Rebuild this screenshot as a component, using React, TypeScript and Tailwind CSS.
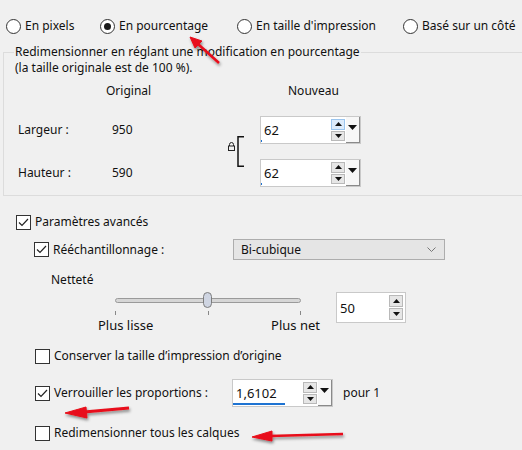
import React from 'react';

function Radio({ label, checked = false }: { label: string; checked?: boolean }) {
  return (
    <div className="flex items-center gap-[4px]">
      <span className="w-[15px] h-[15px] rounded-full border border-[#333] bg-white flex items-center justify-center">
        {checked && <span className="w-[7px] h-[7px] rounded-full bg-[#1a1a1a]" />}
      </span>
      <span>{label}</span>
    </div>
  );
}

function Checkbox({ label, checked = false }: { label: string; checked?: boolean }) {
  return (
    <div className="flex items-center gap-[4px]">
      <span className="w-[15px] h-[15px] border border-[#333] bg-white flex items-center justify-center">
        {checked && (
          <svg width="11" height="9" viewBox="0 0 11 9">
            <path d="M1 4.5 L4 7.5 L10 1" fill="none" stroke="#222" strokeWidth="1.2" />
          </svg>
        )}
      </span>
      <span>{label}</span>
    </div>
  );
}

function Tri({ down = false }: { down?: boolean }) {
  return (
    <svg width="7" height="4" viewBox="0 0 7 4">
      <path d={down ? 'M0 0 H7 L3.5 4 Z' : 'M0 4 H7 L3.5 0 Z'} fill="#111" />
    </svg>
  );
}

function SpinInput({
  value,
  w,
  h,
  dropdown = true,
  bar = 1,
  hover = false,
}: {
  value: string;
  w: string;
  h: string;
  dropdown?: boolean;
  bar?: number;
  hover?: boolean;
}) {
  return (
    <div className={`${w} ${h} flex border border-[#c9c9c9] bg-white`}>
      <div className="relative flex-1 flex items-center pl-[3px] text-[13px]">
        {value}
        <span className="absolute left-0 bottom-[1px] h-[2px] bg-[#1e73d2]" style={{ width: bar }} />
      </div>
      <div className="w-[14px] flex flex-col justify-center gap-[1px] py-[2px]">
        <span className={`flex-1 flex items-center justify-center border ${hover ? 'border-[#9bc5ee] bg-[#dcebfb]' : 'border-[#b9b9b9] bg-[#e6e6e6]'}`}>
          <Tri />
        </span>
        <span className="flex-1 flex items-center justify-center border border-[#b9b9b9] bg-[#e6e6e6]">
          <Tri down />
        </span>
      </div>
      {dropdown ? (
        <div className="w-[14px] ml-[1px] flex items-start justify-center pt-[8px] bg-[#f7f7f7] border-r border-b border-[#8a8a8a]">
          <svg width="9" height="5" viewBox="0 0 9 5">
            <path d="M0 0 H9 L4.5 5 Z" fill="#111" />
          </svg>
        </div>
      ) : (
        <div className="w-[2px]" />
      )}
    </div>
  );
}

export default function App() {
  return (
    <div
      className="relative w-[522px] h-[450px] overflow-hidden bg-[#f0f0f0] text-[12px] leading-[16px] text-[#111]"
      style={{ fontFamily: '"Noto Sans", "Open Sans", sans-serif' }}
    >
      {/* unit choice */}
      <div className="flex items-center h-[16px] mt-[18px] pl-[6px]">
        <div className="w-[94px]"><Radio label="En pixels" /></div>
        <div className="w-[137px]"><Radio label="En pourcentage" checked /></div>
        <div className="w-[166px]"><Radio label="En taille d'impression" /></div>
        <Radio label="Basé sur un côté" />
      </div>

      <fieldset className="mt-[10px] ml-[3px] w-[540px] border-t border-l border-b border-[#dcdcdc] px-0 pb-[8px]">
        <legend className="ml-[10px] px-[1px]">Redimensionner en réglant une modification en pourcentage</legend>
        <div className="pl-[14px]">
          <div className="-ml-[3px]">(la taille originale est de 100 %).</div>

          <div className="flex mt-[7px]">
            <div className="ml-[88px] w-[182px]">Original</div>
            <div>Nouveau</div>
          </div>

          <div className="flex items-center mt-[17px]">
            <div className="flex flex-col gap-[15px] w-[210px]">
              <div className="h-[28px] flex items-center">
                <span className="w-[94px]">Largeur :</span>
                <span>950</span>
              </div>
              <div className="h-[28px] flex items-center">
                <span className="w-[94px]">Hauteur :</span>
                <span>590</span>
              </div>
            </div>
            <div className="flex items-center gap-[2px]">
              <svg className="-mt-[10px]" width="7" height="9" viewBox="0 0 7 9">
                <path d="M1.5 4 V2.5 A2 2 0 0 1 5.5 2.5 V4" fill="none" stroke="#222" strokeWidth="1" />
                <rect x="0.5" y="4" width="6" height="4.5" fill="none" stroke="#222" strokeWidth="1" />
              </svg>
              <svg width="8" height="31" viewBox="0 0 8 31">
                <path d="M7 0.75 H1 V30.25 H7" fill="none" stroke="#111" strokeWidth="1.5" />
              </svg>
            </div>
            <div className="flex flex-col gap-[15px] ml-[15px]">
              <SpinInput value="62" w="w-[101px]" h="h-[28px]" hover />
              <SpinInput value="62" w="w-[101px]" h="h-[28px]" />
            </div>
          </div>
        </div>
      </fieldset>

      {/* advanced */}
      <div className="mt-[18px] pl-[16px]">
        <Checkbox label="Paramètres avancés" checked />
      </div>

      <div className="flex items-center mt-[9px] pl-[34px]">
        <div className="w-[199px]"><Checkbox label="Rééchantillonnage :" checked /></div>
        <div className="w-[212px] h-[21px] flex items-center justify-between pl-[7px] pr-[8px] bg-[#e5e5e5] border border-[#adadad]">
          <span>Bi-cubique</span>
          <svg width="9" height="5" viewBox="0 0 9 5">
            <path d="M0.5 0.5 L4.5 4.5 L8.5 0.5" fill="none" stroke="#777" strokeWidth="1" />
          </svg>
        </div>
      </div>

      <div className="mt-[12px] pl-[51px]">Netteté</div>

      <div className="flex items-start mt-[3px] pl-[98px]">
        <div className="w-[226px] flex flex-col">
          <div className="relative h-[18px] ml-[17px] mr-[23px] flex items-center">
            <div className="w-full h-[5px] rounded-full bg-[#d6d6d6] border border-[#9a9a9a]" />
            <div className="absolute left-[88px] top-[1px] w-[9px] h-[16px] rounded-full bg-[#cfd5e2] border border-[#7d7d7d]" />
          </div>
          <div className="flex justify-between ml-[17px] mr-[23px] h-[8px] items-center">
            <span className="w-px h-[4px] bg-[#888]" />
            <span className="w-px h-[4px] bg-[#888]" />
            <span className="w-px h-[4px] bg-[#888]" />
          </div>
          <div className="flex justify-between text-[13px] leading-[16px]">
            <span>Plus lisse</span>
            <span className="mr-[4px]">Plus net</span>
          </div>
        </div>
        <div className="ml-[12px] mt-[1px]">
          <SpinInput value="50" w="w-[70px]" h="h-[31px]" dropdown={false} bar={0} />
        </div>
      </div>

      <div className="mt-[15px] pl-[35px]">
        <Checkbox label="Conserver la taille d’impression d’origine" />
      </div>

      <div className="flex items-center mt-[15px] pl-[35px]">
        <div className="w-[197px]"><Checkbox label="Verrouiller les proportions :" checked /></div>
        <SpinInput value="1,6102" w="w-[101px]" h="h-[28px]" bar={52} />
        <span className="ml-[10px]">pour 1</span>
      </div>

      <div className="mt-[18px] pl-[35px]">
        <Checkbox label="Redimensionner tous les calques" />
      </div>

      {/* red annotation arrows */}
      <svg className="absolute inset-0 pointer-events-none" width="522" height="450" viewBox="0 0 522 450">
        <defs>
          <filter id="sh" x="-20%" y="-20%" width="140%" height="140%">
            <feDropShadow dx="1" dy="2" stdDeviation="1.5" floodColor="#000" floodOpacity="0.45" />
          </filter>
        </defs>
        <g fill="#e8111a" stroke="#e8111a" filter="url(#sh)">
          <line x1="219" y1="63" x2="198" y2="44" strokeWidth="2.5" />
          <path d="M190 37 L202 41 L195 48 Z" strokeWidth="1" />
          <line x1="129" y1="408" x2="84" y2="412" strokeWidth="3" />
          <path d="M65 413 L86 407 L87 418 Z" strokeWidth="1" />
          <line x1="343" y1="434" x2="270" y2="436" strokeWidth="2.5" />
          <path d="M252 437 L272 431 L272 441 Z" strokeWidth="1" />
        </g>
      </svg>
    </div>
  );
}
